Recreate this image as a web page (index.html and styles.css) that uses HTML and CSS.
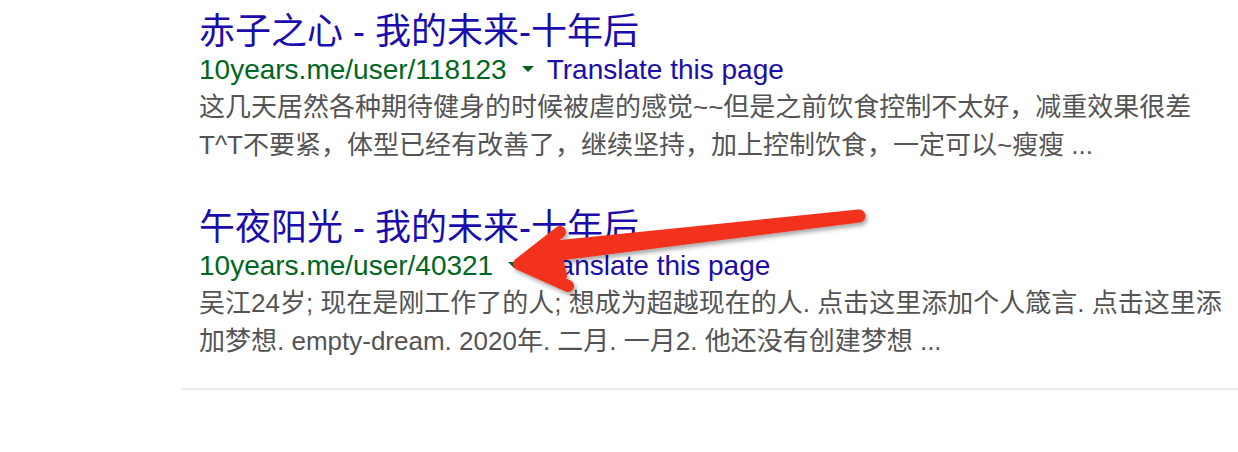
FILE: index.html
```html
<!DOCTYPE html>
<html lang="zh">
<head>
<meta charset="utf-8">
<title>Search results</title>
<link rel="stylesheet" href="styles.css">
</head>
<body>
<div class="page">
  <div class="results">
    <div class="result">
      <a class="title" href="#">赤子之心 - 我的未来-十年后</a>
      <div class="meta">
        <span class="url">10years.me/user/118123</span>
        <span class="caret"></span>
        <a class="translate" href="#">Translate this page</a>
      </div>
      <div class="snippet">这几天居然各种期待健身的时候被虐的感觉~~但是之前饮食控制不太好，减重效果很差<br>T^T不要紧，体型已经有改善了，继续坚持，加上控制饮食，一定可以~瘦瘦 ...</div>
    </div>
    <div class="result">
      <a class="title" href="#">午夜阳光 - 我的未来-十年后</a>
      <div class="meta">
        <span class="url">10years.me/user/40321</span>
        <span class="caret"></span>
        <a class="translate" href="#">Translate this page</a>
      </div>
      <div class="snippet">吴江24岁; 现在是刚工作了的人; 想成为超越现在的人. 点击这里添加个人箴言. 点击这里添<br>加梦想. empty-dream. 2020年. 二月. 一月2. 他还没有创建梦想 ...</div>
    </div>
  </div>
  <div class="separator"></div>
  <svg class="annotation" width="1238" height="452" viewBox="0 0 1238 452" aria-hidden="true">
    <defs>
      <filter id="shadow" x="-10%" y="-30%" width="120%" height="160%">
        <feDropShadow dx="2" dy="3" stdDeviation="2" flood-color="#000" flood-opacity="0.35"/>
      </filter>
    </defs>
    <g filter="url(#shadow)" fill="#f2301f" stroke="#f2301f" stroke-linecap="round" stroke-linejoin="round">
      <path d="M859 216 L560 254 L556 247 Z" stroke-width="13" />
      <path d="M560 232 L519 264 L568 286" fill="none" stroke-width="12" />
      <path d="M522 264 L556 240 L564 276 Z" stroke-width="6" />
    </g>
  </svg>
</div>
</body>
</html>
```

FILE: styles.css
```css
html, body {
  margin: 0;
  padding: 0;
  background: #ffffff;
}

.page {
  position: relative;
  width: 1238px;
  height: 452px;
  overflow: hidden;
  font-family: "Liberation Sans", Arial, "Noto Sans CJK SC", sans-serif;
}

.results {
  padding: 12px 0 0 199px;
  display: flex;
  flex-direction: column;
  gap: 44px;
}

.result {
  display: flex;
  flex-direction: column;
}

.title {
  display: block;
  font-size: 36px;
  line-height: 40px;
  color: #1a0dab;
  text-decoration: none;
  white-space: nowrap;
}

.meta {
  display: flex;
  align-items: center;
  height: 36px;
  font-size: 28px;
  line-height: 36px;
  white-space: nowrap;
}

.url {
  color: #006621;
}

.caret {
  width: 0;
  height: 0;
  margin: 0 13px 0 15px;
  border-left: 6.5px solid transparent;
  border-right: 6.5px solid transparent;
  border-top: 6px solid #006621;
  position: relative;
  top: -1px;
}

.translate {
  color: #1a0dab;
  text-decoration: none;
}

.snippet {
  font-size: 26px;
  line-height: 38px;
  color: #545454;
  white-space: nowrap;
}

.separator {
  margin: 28px 0 0 182px;
  height: 2px;
  background: #ebebeb;
}

.annotation {
  position: absolute;
  left: 0;
  top: 0;
  pointer-events: none;
}
```
